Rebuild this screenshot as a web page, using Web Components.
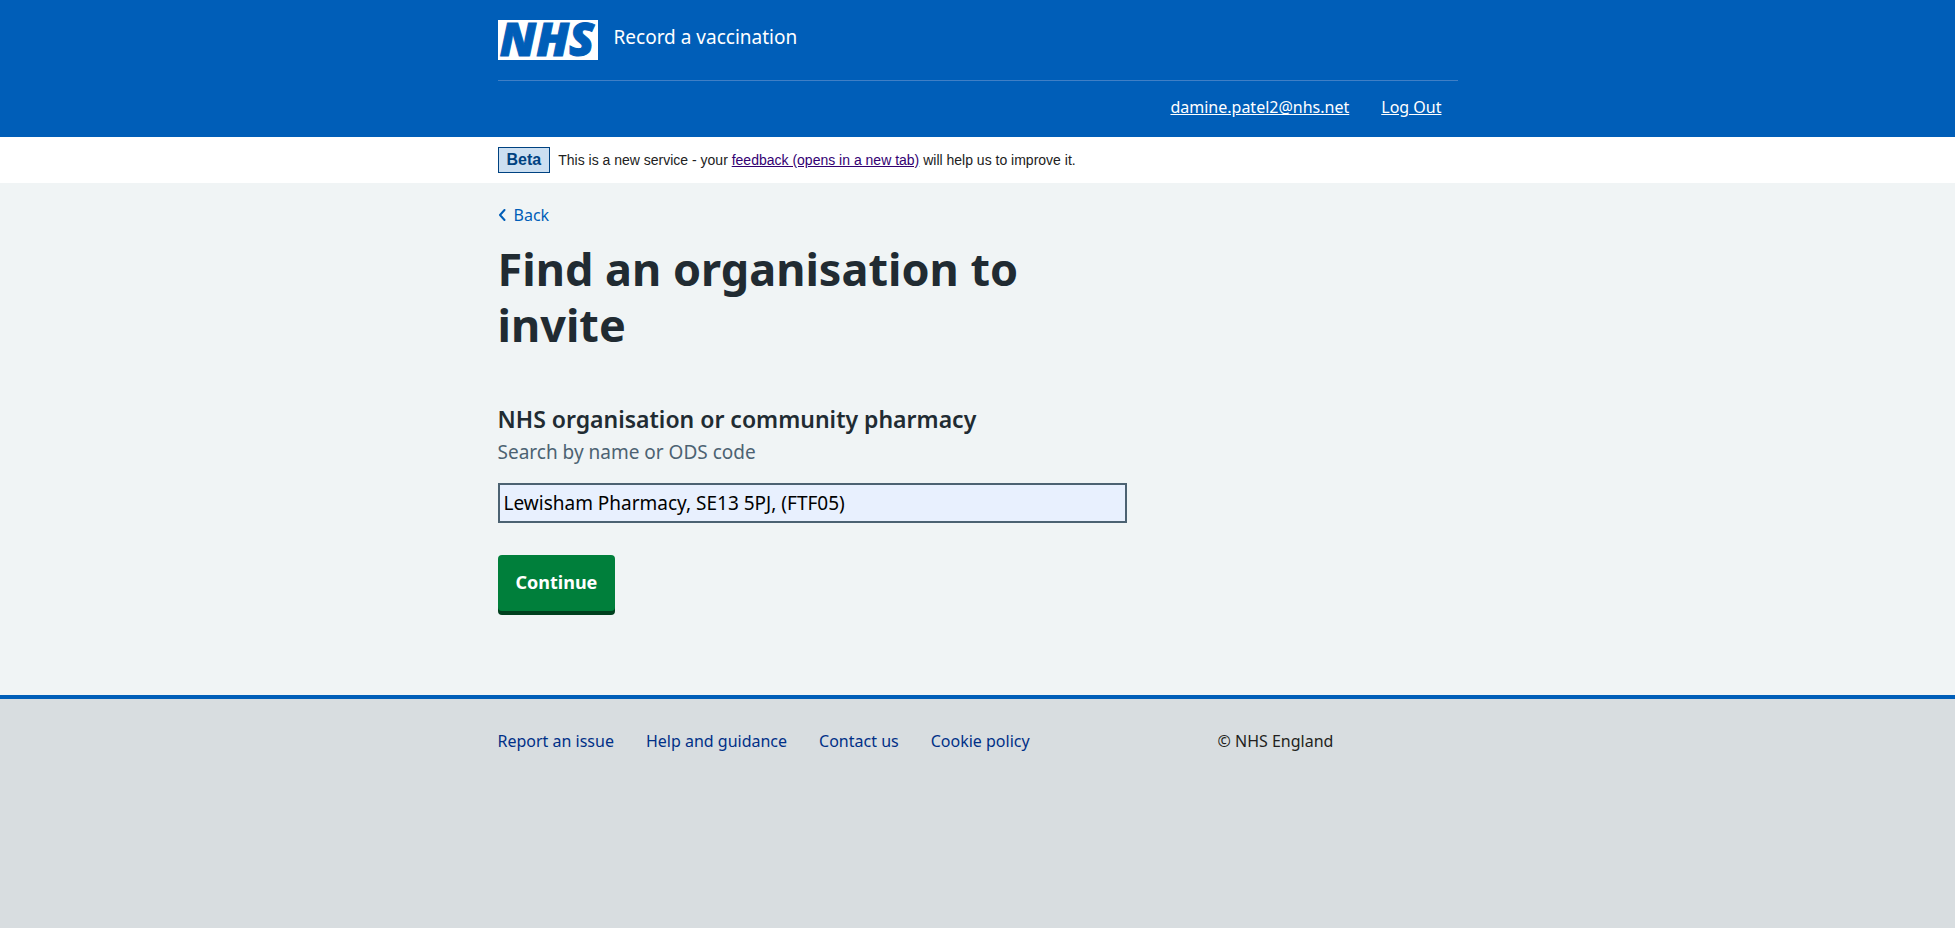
<!DOCTYPE html>
<html lang="en">
<head>
<meta charset="utf-8">
<meta name="viewport" content="width=device-width, initial-scale=1">
<title>Find an organisation to invite</title>
<style>
  body {
    margin: 0;
    min-height: 100vh;
    display: flex;
    flex-direction: column;
    background: #d8dde0;
    color: #212b32;
    font: 16px/24px "Noto Sans", "Open Sans", sans-serif;
  }
</style>
</head>
<body>
<service-header>
  Record a vaccination
  <a slot="account" href="#account">damine.patel2@nhs.net</a>
  <a slot="account" href="#logout">Log Out</a>
</service-header>
<phase-banner phase="Beta">This is a new service - your <feedback-link>feedback (opens in a new tab)</feedback-link> will help us to improve it.</phase-banner>
<page-main>
  <back-link slot="before">Back</back-link>
  <page-title>Find an organisation to invite</page-title>
  <search-field label="NHS organisation or community pharmacy" hint="Search by name or ODS code" value="Lewisham Pharmacy, SE13 5PJ, (FTF05)"></search-field>
  <submit-button>Continue</submit-button>
</page-main>
<service-footer>
  <a href="#issue">Report an issue</a>
  <a href="#help">Help and guidance</a>
  <a href="#contact">Contact us</a>
  <a href="#cookies">Cookie policy</a>
  <span slot="copyright">© NHS England</span>
</service-footer>

<script>
  const container = `
    .container { box-sizing: border-box; max-width: 992px; margin: 0 auto; padding: 0 16px; }
  `;

  function define(name, render) {
    customElements.define(name, class extends HTMLElement {
      constructor() {
        super();
        this.attachShadow({ mode: "open" });
      }
      connectedCallback() {
        this.shadowRoot.innerHTML = render(this);
      }
    });
  }

  define("nhs-logo", () => `
    <style>
      :host { display: block; width: 100px; height: 40px; }
      svg { display: block; overflow: visible; }
      text { font: italic 800 46px/1 "Open Sans", sans-serif; fill: #005eb8; stroke: #005eb8; stroke-width: 1; }
    </style>
    <svg width="100" height="40" viewBox="0 0 100 40" role="img" aria-label="NHS">
      <rect width="100" height="40" fill="#fff"/>
      <text x="49" y="36" text-anchor="middle">NHS</text>
    </svg>`);

  define("service-header", () => `
    <style>
      ${container}
      :host { display: block; background: #005eb8; color: #fff; }
      .brand { display: flex; gap: 16px; padding: 20px 0; border-bottom: 1px solid #3f7fc6; }
      .name { font-size: 19px; line-height: 34px; }
      nav { display: flex; justify-content: flex-end; gap: 32px; padding: 14px 16px 18px; }
      ::slotted(a) { color: #fff; font-size: 16px; line-height: 24px; text-decoration: underline; }
    </style>
    <header class="container">
      <div class="brand"><nhs-logo></nhs-logo><span class="name"><slot></slot></span></div>
      <nav aria-label="Account"><slot name="account"></slot></nav>
    </header>`);

  define("feedback-link", () => `
    <style>
      :host { display: inline; }
      a { color: #330072; text-decoration: underline; }
    </style><a href="#feedback" target="_blank"><slot></slot></a>`);

  define("phase-banner", (el) => `
    <style>
      ${container}
      :host { display: block; background: #fff; color: #212121; font-family: "Liberation Sans", Arial, sans-serif; }
      .row { display: flex; align-items: center; gap: 8px; min-height: 46px; }
      strong { padding: 0 8px; border: 1px solid #004281; background: #ccdff1; color: #004281; font-size: 16px; line-height: 24px; }
      p { margin: 0; font-size: 14px; line-height: 24px; }
    </style>
    <div class="container"><div class="row"><strong>${el.getAttribute("phase")}</strong><p><slot></slot></p></div></div>`);

  define("page-main", () => `
    <style>
      ${container}
      :host { display: block; background: #f0f4f5; }
      main { padding-top: 20px; padding-bottom: 80px; }
      .column { max-width: 629px; }
    </style>
    <div class="container"><main><slot name="before"></slot><div class="column"><slot></slot></div></main></div>`);

  define("back-link", () => `
    <style>
      :host { display: block; }
      a { display: inline-flex; align-items: center; gap: 8px; color: #005eb8; font-size: 16px; line-height: 24px; text-decoration: none; }
    </style>
    <a href="#back"><svg width="8" height="12" viewBox="0 0 8 12" aria-hidden="true"><path d="M6.500 1 2 6l4.500 5" fill="none" stroke="#005eb8" stroke-width="2" stroke-linecap="round" stroke-linejoin="round"/></svg><slot></slot></a>`);

  define("page-title", () => `
    <style>
      :host { display: block; margin-top: 14px; }
      h1 { margin: 0; font-size: 45px; line-height: 56px; font-weight: 700; }
    </style>
    <h1><slot></slot></h1>`);

  define("search-field", (el) => `
    <style>
      :host { display: block; margin-top: 50px; }
      label { display: block; font-size: 23px; line-height: 32px; font-weight: 600; }
      .hint { color: #4c6272; font-size: 19px; line-height: 34px; margin-bottom: 14px; }
      input { box-sizing: border-box; display: block; width: 100%; height: 40px; margin: 0; padding: 0 4px; border: 2px solid #4c6272; border-radius: 0; background: #e8f0fe; color: #000; font: inherit; font-size: 19px; }
    </style>
    <label for="organisation">${el.getAttribute("label")}</label>
    <div class="hint" id="organisation-hint">${el.getAttribute("hint")}</div>
    <input id="organisation" type="text" aria-describedby="organisation-hint" value="${el.getAttribute("value")}">`);

  define("submit-button", () => `
    <style>
      :host { display: block; margin-top: 32px; padding-bottom: 4px; }
      button { display: block; height: 56px; margin: 0; padding: 0 18px 2px; border: 0; border-radius: 4px; background: #007f3b; box-shadow: 0 4px 0 #00401e; color: #fff; font: inherit; font-size: 18px; font-weight: 700; }
    </style>
    <button type="submit"><slot></slot></button>`);

  define("service-footer", () => `
    <style>
      ${container}
      :host { display: block; flex: 1; border-top: 4px solid #005eb8; background: #d8dde0; }
      .row { display: grid; grid-template-columns: 3fr 1fr; padding: 30px 0; }
      nav { display: flex; flex-wrap: wrap; gap: 8px 32px; }
      ::slotted(*) { font-size: 16px; line-height: 24px; }
      ::slotted(a) { color: #003087; text-decoration: none; }
      ::slotted(span) { color: #231f20; }
    </style>
    <footer class="container"><div class="row"><nav aria-label="Support"><slot></slot></nav><slot name="copyright"></slot></div></footer>`);
</script>
</body>
</html>
